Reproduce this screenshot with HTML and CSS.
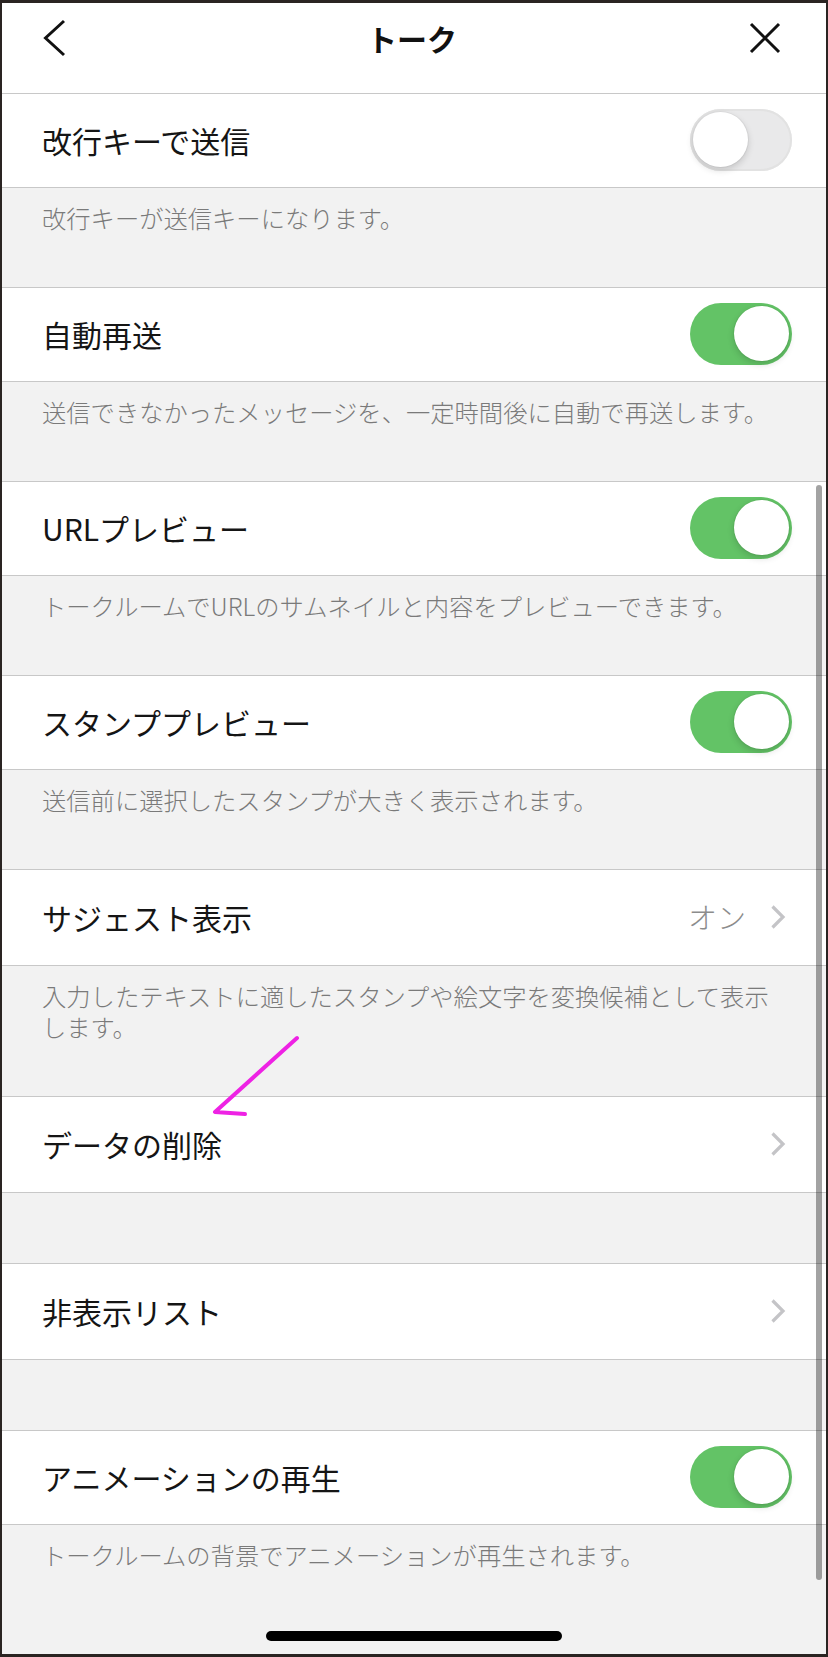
FILE: index.html
```html
<!DOCTYPE html>
<html lang="ja">
<head>
    <meta charset="UTF-8">
    <meta name="viewport" content="width=device-width, initial-scale=1.0">
    <title>トーク</title>
    <link rel="stylesheet" href="styles.css">
</head>
<body>
    <div class="screen">
        <header class="nav">
            <span class="nav-btn back">
                <svg width="24" height="38" viewBox="0 0 24 38"><path d="M22 2 L3.5 19 L22 36" fill="none" stroke="#111" stroke-width="3"/></svg>
            </span>
            <h1 class="nav-title">トーク</h1>
            <span class="nav-btn close">
                <svg width="34" height="34" viewBox="0 0 34 34"><path d="M3 3 L31 31 M31 3 L3 31" fill="none" stroke="#111" stroke-width="3"/></svg>
            </span>
        </header>

        <ul class="settings">
            <li class="row">
                <span class="label">改行キーで送信</span>
                <span class="switch"></span>
            </li>
            <li class="note">改行キーが送信キーになります。</li>

            <li class="row">
                <span class="label">自動再送</span>
                <span class="switch on"></span>
            </li>
            <li class="note">送信できなかったメッセージを、一定時間後に自動で再送します。</li>

            <li class="row">
                <span class="label">URLプレビュー</span>
                <span class="switch on"></span>
            </li>
            <li class="note">トークルームでURLのサムネイルと内容をプレビューできます。</li>

            <li class="row">
                <span class="label">スタンププレビュー</span>
                <span class="switch on"></span>
            </li>
            <li class="note">送信前に選択したスタンプが大きく表示されます。</li>

            <li class="row row-link">
                <span class="label">サジェスト表示</span>
                <span class="value">オン</span>
                <svg class="chevron" width="16" height="26" viewBox="0 0 16 26"><path d="M2.5 2.5 L13 13 L2.5 23.5" fill="none" stroke="#c4c4c7" stroke-width="3.2"/></svg>
            </li>
            <li class="note note-long">入力したテキストに適したスタンプや絵文字を変換候補として表示します。</li>

            <li class="row row-link">
                <span class="label">データの削除</span>
                <svg class="chevron" width="16" height="26" viewBox="0 0 16 26"><path d="M2.5 2.5 L13 13 L2.5 23.5" fill="none" stroke="#c4c4c7" stroke-width="3.2"/></svg>
            </li>
            <li class="spacer"></li>

            <li class="row row-link">
                <span class="label">非表示リスト</span>
                <svg class="chevron" width="16" height="26" viewBox="0 0 16 26"><path d="M2.5 2.5 L13 13 L2.5 23.5" fill="none" stroke="#c4c4c7" stroke-width="3.2"/></svg>
            </li>
            <li class="spacer"></li>

            <li class="row">
                <span class="label">アニメーションの再生</span>
                <span class="switch on"></span>
            </li>
            <li class="note last">トークルームの背景でアニメーションが再生されます。</li>
        </ul>

        <div class="scrollbar"></div>
        <div class="home-bar"></div>

        <!-- hand-drawn marker over the list -->
        <svg class="annotation" width="828" height="1657" viewBox="0 0 828 1657">
            <path d="M297 1038 L215 1112 L245 1114" fill="none" stroke="#ee22e4" stroke-width="4" stroke-linecap="round" stroke-linejoin="round"/>
        </svg>
    </div>
</body>
</html>
```

FILE: styles.css
```css
* {
    margin: 0;
    padding: 0;
    box-sizing: border-box;
}

body {
    font-family: "Noto Sans CJK JP", "Noto Sans", sans-serif;
    background: #2a2422;
}

.screen {
    position: relative;
    width: 828px;
    height: 1657px;
    overflow: hidden;
    background: #f2f2f2;
    border: 2px solid #2a2422;
    border-top-width: 3px;
    border-bottom-width: 3px;
    display: flex;
    flex-direction: column;
}

/* header */
.nav {
    display: grid;
    grid-template-columns: 1fr auto 1fr;
    align-items: center;
    height: 91px;
    padding: 0 44px 20px 40px;
    background: white;
    border-bottom: 1px solid #c8c8c8;
}

.nav-btn {
    display: flex;
    align-items: center;
}

.nav-btn.close {
    justify-content: flex-end;
}

.nav-title {
    font-size: 30px;
    font-weight: bold;
    color: #111;
    line-height: 1;
}

/* list */
.settings {
    list-style: none;
}

.row {
    display: flex;
    align-items: center;
    height: 94px;
    padding: 0 34px 2px 40px;
    background: white;
    border-bottom: 1px solid #c8c8c8;
}

.row-link {
    height: 96px;
    padding-right: 40px;
}

.label {
    flex: 1;
    font-size: 30px;
    color: #151515;
    line-height: 1;
}

.value {
    font-size: 29px;
    font-weight: 300;
    color: #8c8c8c;
    margin-right: 24px;
    line-height: 1;
}

.chevron {
    display: block;
}

.note {
    height: 100px;
    padding: 14px 42px 0 40px;
    font-size: 24.3px;
    font-weight: 300;
    line-height: 31px;
    color: #7a7a7a;
    border-bottom: 1px solid #c8c8c8;
}

.note-long {
    height: 131px;
}

.note.last {
    border-bottom: none;
}

.spacer {
    height: 71px;
    border-bottom: 1px solid #c8c8c8;
}

/* toggle */
.switch {
    position: relative;
    width: 102px;
    height: 62px;
    border-radius: 31px;
    background: #e9e9ea;
    box-shadow: inset 0 0 0 2px #e2e2e2;
}

.switch::after {
    content: "";
    position: absolute;
    top: 3.5px;
    left: 3px;
    width: 55px;
    height: 55px;
    border-radius: 50%;
    background: white;
    box-shadow: 0 3px 7px rgba(0, 0, 0, 0.16), 0 0 0 1px rgba(0, 0, 0, 0.04);
}

.switch.on {
    background: #63c366;
    box-shadow: none;
}

.switch.on::after {
    left: 44px;
}

/* overlays */
.scrollbar {
    position: absolute;
    top: 482px;
    right: 4px;
    width: 6px;
    height: 1095px;
    border-radius: 3px;
    background: rgba(0, 0, 0, 0.36);
}

.home-bar {
    position: absolute;
    bottom: 13px;
    left: 264px;
    width: 296px;
    height: 10px;
    border-radius: 5px;
    background: #000;
}

.annotation {
    position: absolute;
    top: -3px;
    left: -2px;
    pointer-events: none;
}
```
